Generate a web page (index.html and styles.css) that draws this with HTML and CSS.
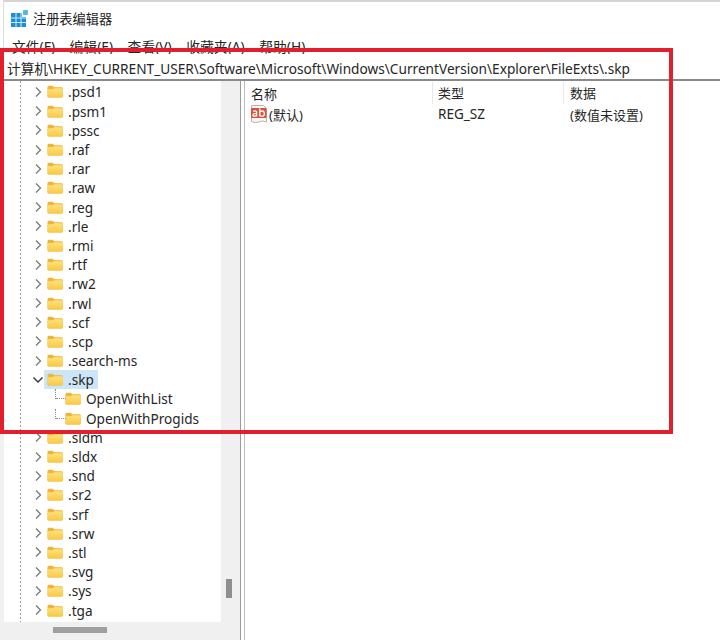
FILE: index.html
```
<!DOCTYPE html>
<html lang="zh">
<head>
<meta charset="utf-8">
<title>注册表编辑器</title>
<link rel="stylesheet" href="styles.css">
</head>
<body>
<svg class="defs" width="0" height="0">
  <defs>
    <linearGradient id="fg" x1="0" y1="0" x2="0" y2="1"><stop offset="0" stop-color="#ffe27a"/><stop offset="1" stop-color="#f9c845"/></linearGradient>
    <symbol id="folder" viewBox="0 0 16 14" preserveAspectRatio="none">
      <path d="M0.5 2.2Q0.5 0.8 2 0.8H5.6L7.4 2.4H14.4Q15.8 2.4 15.8 3.8V12.2Q15.8 13.5 14.4 13.5H2Q0.5 13.5 0.5 12.2Z" fill="#eeb53a"/>
      <path d="M0.5 4.6L5.6 4.6L7.4 3.4H14.4Q15.8 3.4 15.8 4.6V12.2Q15.8 13.5 14.4 13.5H2Q0.5 13.5 0.5 12.2Z" fill="url(#fg)"/>
    </symbol>
    <symbol id="chev-r" viewBox="0 0 10 12"><path d="M3 1.5L7.5 6L3 10.5" fill="none" stroke="#7a7a7a" stroke-width="1.3"/></symbol>
    <symbol id="chev-d" viewBox="0 0 12 10"><path d="M1.5 2.5L6 7L10.5 2.5" fill="none" stroke="#333" stroke-width="1.4"/></symbol>
  </defs>
</svg>
<div class="window">
  <header class="titlebar">
    <svg class="appicon" viewBox="0 0 18 18" width="18" height="18">
      <path d="M0 3H11V7H15V17H0Z" fill="#1b8fd6"/>
      <path d="M5 3V17M10 3V17M0 8H15M0 12.5H15" stroke="#cfeaf8" stroke-width="1"/>
      <rect x="12" y="0" width="5" height="5" rx="1" fill="#55b7e8"/>
    </svg>
    <span class="apptitle">注册表编辑器</span>
  </header>
  <nav class="menubar">
    <span>文件(F)</span><span>编辑(E)</span><span>查看(V)</span><span>收藏夹(A)</span><span>帮助(H)</span>
  </nav>
  <div class="address">计算机\HKEY_CURRENT_USER\Software\Microsoft\Windows\CurrentVersion\Explorer\FileExts\.skp</div>
  <main class="panes">
    <section class="treepane">
      <div class="treescroll">
        <ul class="tree">
          <li class="row"><svg class="chev"><use href="#chev-r"/></svg><svg class="fld"><use href="#folder"/></svg><span class="lbl">.psd1</span></li>
          <li class="row"><svg class="chev"><use href="#chev-r"/></svg><svg class="fld"><use href="#folder"/></svg><span class="lbl">.psm1</span></li>
          <li class="row"><svg class="chev"><use href="#chev-r"/></svg><svg class="fld"><use href="#folder"/></svg><span class="lbl">.pssc</span></li>
          <li class="row"><svg class="chev"><use href="#chev-r"/></svg><svg class="fld"><use href="#folder"/></svg><span class="lbl">.raf</span></li>
          <li class="row"><svg class="chev"><use href="#chev-r"/></svg><svg class="fld"><use href="#folder"/></svg><span class="lbl">.rar</span></li>
          <li class="row"><svg class="chev"><use href="#chev-r"/></svg><svg class="fld"><use href="#folder"/></svg><span class="lbl">.raw</span></li>
          <li class="row"><svg class="chev"><use href="#chev-r"/></svg><svg class="fld"><use href="#folder"/></svg><span class="lbl">.reg</span></li>
          <li class="row"><svg class="chev"><use href="#chev-r"/></svg><svg class="fld"><use href="#folder"/></svg><span class="lbl">.rle</span></li>
          <li class="row"><svg class="chev"><use href="#chev-r"/></svg><svg class="fld"><use href="#folder"/></svg><span class="lbl">.rmi</span></li>
          <li class="row"><svg class="chev"><use href="#chev-r"/></svg><svg class="fld"><use href="#folder"/></svg><span class="lbl">.rtf</span></li>
          <li class="row"><svg class="chev"><use href="#chev-r"/></svg><svg class="fld"><use href="#folder"/></svg><span class="lbl">.rw2</span></li>
          <li class="row"><svg class="chev"><use href="#chev-r"/></svg><svg class="fld"><use href="#folder"/></svg><span class="lbl">.rwl</span></li>
          <li class="row"><svg class="chev"><use href="#chev-r"/></svg><svg class="fld"><use href="#folder"/></svg><span class="lbl">.scf</span></li>
          <li class="row"><svg class="chev"><use href="#chev-r"/></svg><svg class="fld"><use href="#folder"/></svg><span class="lbl">.scp</span></li>
          <li class="row"><svg class="chev"><use href="#chev-r"/></svg><svg class="fld"><use href="#folder"/></svg><span class="lbl">.search-ms</span></li>
          <li class="row open"><svg class="chev-open"><use href="#chev-d"/></svg><span class="sel"><svg class="fld"><use href="#folder"/></svg><span class="lbl">.skp</span></span></li>
          <li class="row child"><span class="elbow"></span><svg class="fld"><use href="#folder"/></svg><span class="lbl">OpenWithList</span></li>
          <li class="row child"><span class="elbow"></span><svg class="fld"><use href="#folder"/></svg><span class="lbl">OpenWithProgids</span></li>
          <li class="row"><svg class="chev"><use href="#chev-r"/></svg><svg class="fld"><use href="#folder"/></svg><span class="lbl">.sldm</span></li>
          <li class="row"><svg class="chev"><use href="#chev-r"/></svg><svg class="fld"><use href="#folder"/></svg><span class="lbl">.sldx</span></li>
          <li class="row"><svg class="chev"><use href="#chev-r"/></svg><svg class="fld"><use href="#folder"/></svg><span class="lbl">.snd</span></li>
          <li class="row"><svg class="chev"><use href="#chev-r"/></svg><svg class="fld"><use href="#folder"/></svg><span class="lbl">.sr2</span></li>
          <li class="row"><svg class="chev"><use href="#chev-r"/></svg><svg class="fld"><use href="#folder"/></svg><span class="lbl">.srf</span></li>
          <li class="row"><svg class="chev"><use href="#chev-r"/></svg><svg class="fld"><use href="#folder"/></svg><span class="lbl">.srw</span></li>
          <li class="row"><svg class="chev"><use href="#chev-r"/></svg><svg class="fld"><use href="#folder"/></svg><span class="lbl">.stl</span></li>
          <li class="row"><svg class="chev"><use href="#chev-r"/></svg><svg class="fld"><use href="#folder"/></svg><span class="lbl">.svg</span></li>
          <li class="row"><svg class="chev"><use href="#chev-r"/></svg><svg class="fld"><use href="#folder"/></svg><span class="lbl">.sys</span></li>
          <li class="row"><svg class="chev"><use href="#chev-r"/></svg><svg class="fld"><use href="#folder"/></svg><span class="lbl">.tga</span></li>
        </ul>
        <div class="vbar"><span class="vthumb"></span></div>
      </div>
      <div class="hbar"><span class="hthumb"></span></div>
    </section>
    <section class="listpane">
      <div class="listhead"><span class="c1">名称</span><span class="c2">类型</span><span class="c3">数据</span></div>
      <div class="listrow">
        <span class="c1">
          <svg class="abicon" viewBox="0 0 18 18" width="18" height="18">
            <path d="M1.5 0.5H13.5L16.5 3.5V17Q12 15 9 17Q5 18.5 1.5 16.5Z" fill="#f8f5f2" stroke="#b9b4b0" stroke-width="1"/>
            <rect x="1" y="3" width="15.5" height="10" rx="1" fill="#d9533c"/>
            <path d="M3.2 6.3Q5.8 5.4 6.6 6.8V11.5M6.6 8.4Q3 8.2 3 10.2Q3 12 6.6 10.6M9.8 3.6V11.5M9.8 7.2Q10.5 5.9 12.2 6Q14.4 6.2 14.4 8.6Q14.4 11.4 12.2 11.4Q10.5 11.4 9.8 10" fill="none" stroke="#fff" stroke-width="1.3"/>
          </svg>
          (默认)
        </span>
        <span class="c2 reg">REG_SZ</span>
        <span class="c3 val">(数值未设置)</span>
      </div>
    </section>
  </main>
</div>
<div class="redframe"></div>
</body>
</html>
```
FILE: styles.css
```
* { box-sizing: border-box; }
html, body { margin: 0; padding: 0; height: 640px; overflow: hidden; background: #fff; }
body {
  font-family: "Noto Sans", "Noto Sans CJK SC", sans-serif;
  font-size: 13.6px;
  color: #262626;
}
.defs { position: absolute; }
.window {
  height: 640px;
  margin-left: 3px;
  border-top: 2px solid #d4d4d4;
  border-left: 1px solid #dcdcdc;
  display: flex;
  flex-direction: column;
}
.titlebar {
  height: 32px;
  display: flex;
  align-items: center;
  padding-left: 7px;
  gap: 4px;
  flex: none;
}
.appicon { margin-top: 1px; }
.apptitle { font-size: 13.2px; color: #222; }
.menubar {
  height: 20px;
  flex: none;
  display: flex;
  gap: 14.5px;
  padding-left: 8px;
  font-size: 13.8px;
  line-height: 26px;
}
.address {
  height: 27px;
  flex: none;
  margin-left: -4px;
  padding-left: 7px;
  line-height: 29px;
  white-space: nowrap;
  border-bottom: 2px solid #8a8a8a;
  font-size: 13.67px;
  background: #fff;
  position: relative;
}
.panes { flex: 1; min-height: 0; display: flex; margin-left: -4px; }
.treepane {
  width: 241px;
  flex: none;
  display: flex;
  flex-direction: column;
  border-right: 1px solid #9a9a9a;
  padding-left: 4px;
  background: #f0f0f0;
}
.treescroll { flex: 1; min-height: 0; display: flex; overflow: hidden; }
.tree {
  list-style: none;
  margin: 0;
  padding: 1.4px 0 0;
  width: 217px;
  background: #fff;
  background-image: linear-gradient(#9a9a9a 50%, transparent 50%);
  background-size: 1px 4px;
  background-repeat: repeat-y;
  background-position: 16px 0;
  position: relative;
}
.row {
  height: 19.2px;
  display: flex;
  align-items: center;
  padding-left: 29px;
  white-space: nowrap;
}
.chev { width: 10px; height: 12px; flex: none; }
.chev-open { width: 12px; height: 10px; margin-left: -1px; margin-right: -1px; flex: none; }
.fld { width: 16px; height: 13px; margin-left: 4px; flex: none; }
.lbl { margin-left: 5px; }
.sel {
  display: flex;
  align-items: center;
  height: 19px;
  padding-right: 4px;
  margin-left: 1px;
  background: #cde6f7;
  border-radius: 1px;
}
.sel .fld { margin-left: 3px; }
.child { padding-left: 47px; position: relative; }
.child .fld { margin-left: 14px; }
.elbow {
  width: 10px;
  height: 0;
  border-top: 1px dotted #8a8a8a;
  position: absolute;
  left: 52px;
  top: 9px;
}
.child .elbow::before {
  content: "";
  position: absolute;
  left: -1px;
  top: -10px;
  height: 10px;
  border-left: 1px dotted #8a8a8a;
}
.vbar { flex: 1; background: #f0f0f0; position: relative; }
.vthumb {
  position: absolute;
  left: 5px;
  top: 498px;
  width: 6px;
  height: 19px;
  background: #8f8f8f;
}
.hbar { height: 18px; flex: none; position: relative; background: #f0f0f0; }
.hthumb {
  position: absolute;
  left: 49px;
  top: 5px;
  width: 54px;
  height: 6px;
  background: #a0a0a0;
}
.listpane { flex: 1; min-width: 0; border-left: 1px solid #bdbdbd; margin-left: 3px; background: #fff; }
.listhead, .listrow { display: flex; align-items: center; font-size: 13px; }
.listhead { height: 23px; padding-top: 1px; }
.listrow { height: 24px; margin-top: -2px; }
.c1 { width: 187px; padding-left: 6px; display: flex; align-items: center; gap: 1px; }
.abicon { margin-left: -1px; }
.c2 { width: 131px; padding-left: 5px; }
.c3 { padding-left: 6px; }
.reg { padding-left: 6px; font-size: 13.5px; }
.val { padding-left: 7px; }
.listhead .c2, .listhead .c3 { border-left: 1px solid #e8e8e8; height: 22px; line-height: 22px; }
.redframe {
  position: absolute;
  left: 0;
  top: 48px;
  width: 673px;
  height: 386px;
  border: 4px solid #e0202c;
  pointer-events: none;
}
```
